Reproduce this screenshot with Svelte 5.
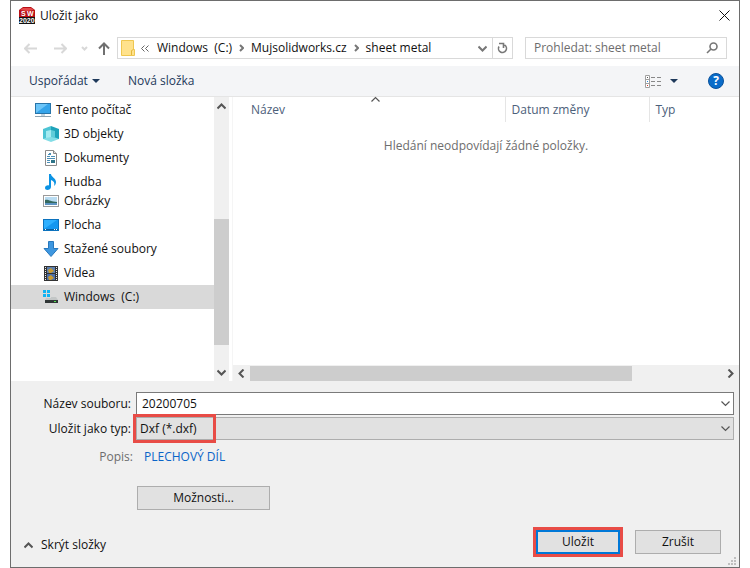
<script lang="ts">
  type Place = { id: string; label: string; root?: boolean; clipped?: boolean };

  const places: Place[] = [
    { id: 'pc', label: 'Tento počítač', root: true },
    { id: 'objects', label: '3D objekty' },
    { id: 'documents', label: 'Dokumenty' },
    { id: 'music', label: 'Hudba', clipped: true },
    { id: 'pictures', label: 'Obrázky' },
    { id: 'desktop', label: 'Plocha' },
    { id: 'downloads', label: 'Stažené soubory' },
    { id: 'videos', label: 'Videa' },
    { id: 'drive', label: 'Windows  (C:)' }
  ];
  const crumbs = ['Windows  (C:)', 'Mujsolidworks.cz', 'sheet metal'];

  let selected = $state('drive');
  let fileName = $state('20200705');
  let fileType = $state('dxf');
  let query = $state('');
</script>

{#snippet chevron(dir: string)}
  <svg class="chevron {dir}" width="9" height="9" viewBox="0 0 9 9" aria-hidden="true">
    <path d="M0.5 2.5L4.5 6.5L8.5 2.5" />
  </svg>
{/snippet}

{#snippet placeIcon(id: string)}
  <svg class="place-icon" width="16" height="16" viewBox="0 0 16 16" aria-hidden="true">
    {#if id === 'pc'}
      <rect x="0.5" y="1.5" width="15" height="10" fill="#35a4ea" stroke="#2874a8" />
      <path d="M1 11V2H13Z" fill="#6cc5f8" />
      <path d="M6 12h4v2H6z" fill="#c3d5e0" />
      <path d="M0 14.5h16" stroke="#8fa3b0" />
    {:else if id === 'objects'}
      <path d="M0 3L8 0V13L0 13Z" fill="#4dc4d4" />
      <path d="M8 0L16 3V13L8 13Z" fill="#1ea3ba" />
      <path d="M0 13L8 10L16 13L8 16Z" fill="#83dde6" />
      <path d="M3 5L8 4V11L3 12Z" fill="#a5ebf1" />
      <path d="M8 4L12 5V12L8 11Z" fill="#5fccd9" />
    {:else if id === 'documents'}
      <path d="M2.5 0.5H10.5L13.5 3.5V15.5H2.5Z" fill="#fff" stroke="#8a8a8a" />
      <path d="M10.5 0.5V3.5H13.5" fill="#ddd" stroke="#8a8a8a" />
      <path d="M6 3.5H8M5 4.5H8M4 6.5H7M8 6.5H12M4 8.5H12M4 10.5H7M4 12.5H7" stroke="#4c8fb7" />
      <path d="M8 10H12V13H8Z" fill="#2d7488" />
    {:else if id === 'music'}
      <path d="M6 0H8C8 3 13 4 13 8C13 10 12 11 11 12C12 9 11 7 8 6V13C8 15 6 16 4.5 16C3 16 2 15 2 14C2 12 4 11 6 11.5Z" fill="#0c93e4" />
    {:else if id === 'pictures'}
      <rect x="0.5" y="2.5" width="15" height="11" fill="#fff" stroke="#9a9a9a" />
      <rect x="2" y="4" width="12" height="8" fill="#b9dcf2" />
      <path d="M2 7C5 6 8 9 14 9V10H2Z" fill="#35695f" />
      <path d="M2 10H14V12H2Z" fill="#5c93c2" />
    {:else if id === 'desktop'}
      <rect x="0.5" y="2.5" width="15" height="11" fill="#1597f0" stroke="#0c72bd" />
      <path d="M1 12V3H14Z" fill="#2fb0ff" />
      <path d="M1 12.5H15" stroke="#0b5e9c" />
      <path d="M2 12.5H3M11 12.5H12M13 12.5H14" stroke="#fff" />
    {:else if id === 'downloads'}
      <path d="M5.5 0.5H10.5V7.5H15L8 15.5L1 7.5H5.5Z" fill="#3e97e0" stroke="#2878bd" />
    {:else if id === 'videos'}
      <rect x="1" y="1" width="14" height="15" fill="#333" />
      <path d="M4 2H12V8H4Z" fill="#5c7fae" />
      <path d="M4 9H12V15H4Z" fill="#4b6faa" />
      <path d="M5 5L8 3L11 6L8 8H6ZM5 12L8 10L11 13L8 15H6Z" fill="#c99b32" />
      <path d="M2.5 2V16M13.5 2V16" stroke="#eee" stroke-dasharray="1 1" />
    {:else}
      <path d="M0 1H3V4H0ZM4 1H7V4H4ZM0 5H3V8H0ZM4 5H7V8H4Z" fill="#0fb2f2" />
      <path d="M8 8H13L15 11H2L3 9H8Z" fill="#c3c6c6" />
      <path d="M2 11H15V14H2Z" fill="#303636" />
      <path d="M11 12.5H13" stroke="#52e24e" />
    {/if}
  </svg>
{/snippet}

<main class="dialog">
  <header class="titlebar">
    <svg width="16" height="17" viewBox="0 0 16 17" aria-hidden="true">
      <path d="M0 3L4 0H12L16 3V11H0Z" fill="#b81016" />
      <path d="M1 3L4 1H12L15 3L8 4Z" fill="#e5484a" />
      <text class="logo-text" x="2" y="9">S</text>
      <text class="logo-text" x="8" y="9">W</text>
      <rect x="0" y="10" width="16" height="7" fill="#111" />
      <text class="logo-text" x="0" y="16">2020</text>
    </svg>
    <h1>Uložit jako</h1>
    <button class="plain close" aria-label="Zavřít">
      <svg width="11" height="11" viewBox="0 0 11 11"><path d="M0.5 0.5L10.5 10.5M10.5 0.5L0.5 10.5" stroke="#111" /></svg>
    </button>
  </header>

  <nav class="navigation">
    <div class="history">
      <button class="plain faded" aria-label="Zpět">
        <svg width="13" height="11" viewBox="0 0 13 11"><path d="M13 5.5H1M5.5 1L1 5.5L5.5 10" /></svg>
      </button>
      <button class="plain faded" aria-label="Vpřed">
        <svg width="13" height="11" viewBox="0 0 13 11"><path d="M0 5.5H12M7.5 1L12 5.5L7.5 10" /></svg>
      </button>
      <button class="plain faded recent" aria-label="Poslední umístění">
        <svg width="7" height="5" viewBox="0 0 7 5"><path d="M1 1L3.5 3.5L6 1" /></svg>
      </button>
      <button class="plain up" aria-label="Nahoru">
        <svg width="12" height="13" viewBox="0 0 12 13"><path d="M6 13V2M1 6.5L6 1.5L11 6.5" /></svg>
      </button>
    </div>
    <div class="address">
      <svg class="folder" width="14" height="16" viewBox="0 0 14 16" aria-hidden="true">
        <path d="M0.5 0.5H12.5V9.5H13.5V15.5H0.5Z" fill="#ffe28c" stroke="#efc750" />
        <path d="M10.5 15V10.5L12.5 9.5" fill="none" stroke="#e4b83c" />
      </svg>
      <svg class="overflow" width="8" height="7" viewBox="0 0 8 7" aria-hidden="true">
        <path d="M3.5 0.5L0.5 3.5L3.5 6.5M7.5 0.5L4.5 3.5L7.5 6.5" />
      </svg>
      {#each crumbs as crumb, i}
        {#if i > 0}
          <svg class="separator" width="5" height="8" viewBox="0 0 5 8" aria-hidden="true"><path d="M1 1L4 4L1 7" /></svg>
        {/if}
        <button class="plain crumb">{crumb}</button>
      {/each}
      <button class="plain expand" aria-label="Předchozí umístění">{@render chevron('down')}</button>
      <button class="plain refresh" aria-label="Aktualizovat">
        <svg width="11" height="12" viewBox="0 0 11 12"><path d="M7.5 3A4 4 0 1 1 2 4.5M2 1.5H6.5V6" /></svg>
      </button>
    </div>
    <label class="search">
      <input type="search" placeholder="Prohledat: sheet metal" aria-label="Prohledat" bind:value={query} />
      <svg width="12" height="12" viewBox="0 0 12 12" aria-hidden="true">
        <circle cx="7.5" cy="4.5" r="3.5" /><path d="M5 7L1 11" />
      </svg>
    </label>
  </nav>

  <div class="toolbar">
    <button class="plain organize">Uspořádat<span class="triangle"></span></button>
    <button class="plain">Nová složka</button>
    <button class="plain view" aria-label="Změnit zobrazení">
      <svg width="17" height="13" viewBox="0 0 17 13">
        <path d="M0.5 0.5H4.5V12.5H0.5ZM0.5 4.5H4.5M0.5 8.5H4.5" fill="#fff" stroke="#a0a0a0" />
        <path d="M6 2.5H10M12 2.5H16M6 6.5H10M12 6.5H16M6 10.5H10M12 10.5H16" stroke="#888" />
        <path d="M2 2.5H3" stroke="#555" /><path d="M2 6.5H3" stroke="#2a8be0" /><path d="M2 10.5H3" stroke="#d13a2a" />
      </svg>
      <span class="triangle"></span>
    </button>
    <button class="help" aria-label="Nápověda">?</button>
  </div>

  <div class="browser">
    <aside>
      <ul class="places">
        {#each places as place}
          <li class:clipped={place.clipped}>
            <button
              class="plain place"
              class:root={place.root}
              class:selected={selected === place.id}
              onclick={() => (selected = place.id)}
            >
              {@render placeIcon(place.id)}
              <span>{place.label}</span>
            </button>
          </li>
        {/each}
      </ul>
      <div class="scroll vertical">
        {@render chevron('up')}
        <div class="track"><div class="thumb"></div></div>
        {@render chevron('down')}
      </div>
    </aside>
    <section class="files">
      <table>
        <thead>
          <tr>
            <th class="name">Název<span class="sort">{@render chevron('up')}</span></th>
            <th class="date">Datum změny</th>
            <th class="type">Typ</th>
          </tr>
        </thead>
        <tbody>
          <tr><td colspan="3">Hledání neodpovídají žádné položky.</td></tr>
        </tbody>
      </table>
      <div class="scroll horizontal">
        {@render chevron('left')}
        <div class="track"><div class="thumb"></div></div>
        {@render chevron('right')}
      </div>
    </section>
  </div>

  <form class="fields" onsubmit={(e) => e.preventDefault()}>
    <div class="grid">
      <label for="file-name">Název souboru:</label>
      <div class="combo">
        <input id="file-name" type="text" bind:value={fileName} />
        {@render chevron('down')}
      </div>
      <label for="file-type">Uložit jako typ:</label>
      <div class="combo">
        <select id="file-type" bind:value={fileType}>
          <option value="dxf">Dxf (*.dxf)</option>
        </select>
        {@render chevron('down')}
        <span class="highlight"></span>
      </div>
    </div>
    <div class="description">
      <span class="caption">Popis:</span>
      <a href="#popis">PLECHOVÝ DÍL</a>
    </div>
    <button type="button" class="button options">Možnosti...</button>

    <footer>
      <button type="button" class="plain hide">{@render chevron('up')}Skrýt složky</button>
      <div class="actions">
        <span class="marked"><button type="submit" class="button primary">Uložit</button></span>
        <button type="button" class="button">Zrušit</button>
      </div>
    </footer>
  </form>
  <svg class="grip" width="8" height="8" viewBox="0 0 8 8" aria-hidden="true">
    <path d="M6 0h2v2H6zM3 3h2v2H3zM6 3h2v2H6zM0 6h2v2H0zM3 6h2v2H3zM6 6h2v2H6z" fill="#bfbfbf" />
  </svg>
</main>

<style>
  :global(body) {
    background: #fff;
  }

  .dialog {
    position: relative;
    display: flex;
    flex-direction: column;
    box-sizing: border-box;
    min-height: 100vh;
    margin: 0 10px;
    border: 1px solid #6d6d6d;
    background: #fff;
    color: #111;
    font: 12px/16px "Open Sans", "Noto Sans", sans-serif;
  }

  button,
  input,
  select {
    box-sizing: border-box;
    margin: 0;
    font: inherit;
    color: inherit;
  }

  .plain {
    display: flex;
    align-items: center;
    padding: 0;
    border: 0;
    background: none;
    white-space: pre;
  }

  svg {
    flex-shrink: 0;
  }

  .chevron {
    fill: none;
    stroke: #555;
    stroke-width: 2;
  }

  .up.chevron {
    transform: rotate(180deg);
  }

  .left.chevron {
    transform: rotate(90deg);
  }

  .right.chevron {
    transform: rotate(-90deg);
  }

  /* Title bar */
  .titlebar {
    display: flex;
    align-items: center;
    height: 29px;
    padding: 0 9px 0 8px;
  }

  .titlebar h1 {
    margin: 0 0 0 5px;
    font-size: 12px;
    font-weight: 400;
  }

  .close {
    margin-left: auto;
  }

  .logo-text {
    fill: #fff;
    font: bold 7px "Liberation Sans", sans-serif;
  }

  /* Navigation row */
  .navigation {
    display: flex;
    align-items: center;
    height: 36px;
    padding: 0 12px 0 13px;
  }

  .history {
    display: flex;
    align-items: center;
    width: 93px;
  }

  .history svg {
    fill: none;
    stroke: #707070;
    stroke-width: 2;
  }

  .history .faded svg {
    stroke: #d8d8d8;
    stroke-width: 2;
  }

  .history .faded {
    margin-right: 17px;
  }

  .history .recent {
    margin: 0 10px 0 -3px;
  }

  .address {
    display: flex;
    flex: 1;
    align-items: center;
    box-sizing: border-box;
    height: 22px;
    border: 1px solid #d9d9d9;
    padding-left: 3px;
  }

  .overflow {
    margin: 0 8px 0 6px;
    fill: none;
    stroke: #666;
  }

  .separator {
    margin: 0 7px;
    fill: none;
    stroke: #777;
    stroke-width: 2;
  }

  .address .chevron {
    stroke: #777;
  }

  .expand {
    margin: 0 5px 0 auto;
  }

  .refresh {
    justify-content: center;
    width: 20px;
    height: 20px;
    border-left: 1px solid #d9d9d9;
  }

  .refresh svg,
  .search svg {
    fill: none;
    stroke: #777;
    stroke-width: 1.6;
  }

  .search {
    display: flex;
    align-items: center;
    box-sizing: border-box;
    width: 202px;
    height: 22px;
    margin-left: 12px;
    padding: 0 8px;
    border: 1px solid #d9d9d9;
  }

  .search input {
    flex: 1;
    min-width: 0;
    padding: 0;
    border: 0;
    outline: 0;
    background: none;
  }

  .search input::placeholder {
    color: #6d6d6d;
    opacity: 1;
  }

  /* Command bar */
  .toolbar {
    display: flex;
    align-items: center;
    height: 30px;
    padding: 0 15px 0 18px;
    border-bottom: 1px solid #e5e5e5;
    background: #f4f5f7;
    color: #1e395b;
  }

  .organize {
    gap: 4px;
    margin-right: 28px;
  }

  .triangle {
    border: 4px solid transparent;
    border-top: 4px solid #1e395b;
    border-bottom: 0;
  }

  .view {
    gap: 8px;
    margin-left: auto;
  }

  .help {
    width: 16px;
    height: 16px;
    margin-left: 30px;
    padding: 0;
    border: 1px solid #0a529c;
    border-radius: 50%;
    background: #0a6cc9;
    color: #fff;
    font-weight: 700;
    line-height: 14px;
  }

  /* Folder tree and file list */
  .browser {
    display: flex;
    flex: 1;
  }

  aside {
    display: flex;
    width: 218px;
  }

  .places {
    flex: 1;
    margin: 0;
    padding: 1px 0 0;
    list-style: none;
  }

  .place {
    width: 100%;
    height: 24px;
    gap: 5px;
    padding-left: 32px;
  }

  .place.root {
    padding-left: 24px;
  }

  .clipped {
    height: 19px;
  }

  .place.selected {
    background: #d9d9d9;
  }

  .scroll {
    display: flex;
    align-items: center;
    background: #f0f0f0;
  }

  .scroll .track {
    display: flex;
    flex: 1;
  }

  .thumb {
    background: #cdcdcd;
  }

  .vertical {
    flex-direction: column;
    width: 15px;
    padding: 5px 0 4px;
  }

  .vertical .track {
    flex-direction: column;
    justify-content: flex-end;
    width: 15px;
    padding-bottom: 23px;
  }

  .vertical .thumb {
    height: 54%;
  }

  .horizontal {
    height: 16px;
    padding: 0 4px;
  }

  .horizontal .track {
    height: 15px;
    padding: 0 4px;
  }

  .horizontal .thumb {
    width: 81%;
  }

  .files {
    display: flex;
    flex: 1;
    flex-direction: column;
    justify-content: space-between;
    margin-left: 3px;
    border-left: 1px solid #f5f5f5;
  }

  table {
    width: 100%;
    border-collapse: collapse;
    table-layout: fixed;
  }

  th {
    position: relative;
    box-sizing: border-box;
    height: 25px;
    padding: 0 6px;
    border-right: 1px solid #e5e5e5;
    color: #4c607a;
    font-weight: 400;
    text-align: left;
  }

  th.name {
    width: 272px;
    padding-left: 18px;
  }

  th.date {
    width: 144px;
  }

  th.type {
    border-right: 0;
  }

  .sort {
    position: absolute;
    top: -2px;
    left: 51%;
    display: flex;
  }

  .sort .chevron,
  .combo .chevron {
    stroke-width: 1.2;
  }

  td {
    padding: 16px 0 0;
    color: #6d6d6d;
    text-align: center;
  }

  /* Name, type and buttons */
  .fields {
    padding: 11px 5px 10px 13px;
    background: #f0f0f0;
  }

  .grid {
    display: grid;
    grid-template-columns: 107px 1fr;
    gap: 2px 5px;
    align-items: center;
  }

  .grid label {
    text-align: right;
  }

  .combo {
    position: relative;
    display: flex;
  }

  .combo input,
  .combo select {
    width: 100%;
    height: 23px;
    padding: 0 5px;
    border: 1px solid #7a7a7a;
    border-radius: 0;
    outline: 0;
    background: #fff;
    appearance: none;
  }

  .combo select {
    padding: 0 3px;
    border-color: #adadad;
    background: #e1e1e1;
  }

  .combo .chevron {
    position: absolute;
    top: 7px;
    right: 4px;
    pointer-events: none;
  }

  .highlight {
    position: absolute;
    top: -3px;
    left: -3px;
    width: 77px;
    height: 23px;
    border: 3px solid #e84c46;
    pointer-events: none;
  }

  .description {
    display: flex;
    gap: 11px;
    padding: 9px 0 21px;
  }

  .caption {
    width: 109px;
    color: #6d6d6d;
    text-align: right;
  }

  .description a {
    color: #0a64c8;
    text-decoration: none;
  }

  .button {
    width: 86px;
    height: 24px;
    padding: 0;
    border: 1px solid #adadad;
    background: #e1e1e1;
  }

  .options {
    display: block;
    width: 133px;
    margin-left: 113px;
  }

  footer {
    display: flex;
    align-items: flex-end;
    justify-content: space-between;
    padding: 17px 13px 0 0;
  }

  .hide {
    gap: 8px;
    margin-bottom: 4px;
  }

  .actions {
    display: flex;
    align-items: center;
    gap: 12px;
  }

  .marked {
    display: flex;
    border: 3px solid #e84c46;
  }

  .primary {
    width: 84px;
    border: 2px solid #0078d7;
  }

  .grip {
    position: absolute;
    right: 3px;
    bottom: 2px;
  }
</style>
